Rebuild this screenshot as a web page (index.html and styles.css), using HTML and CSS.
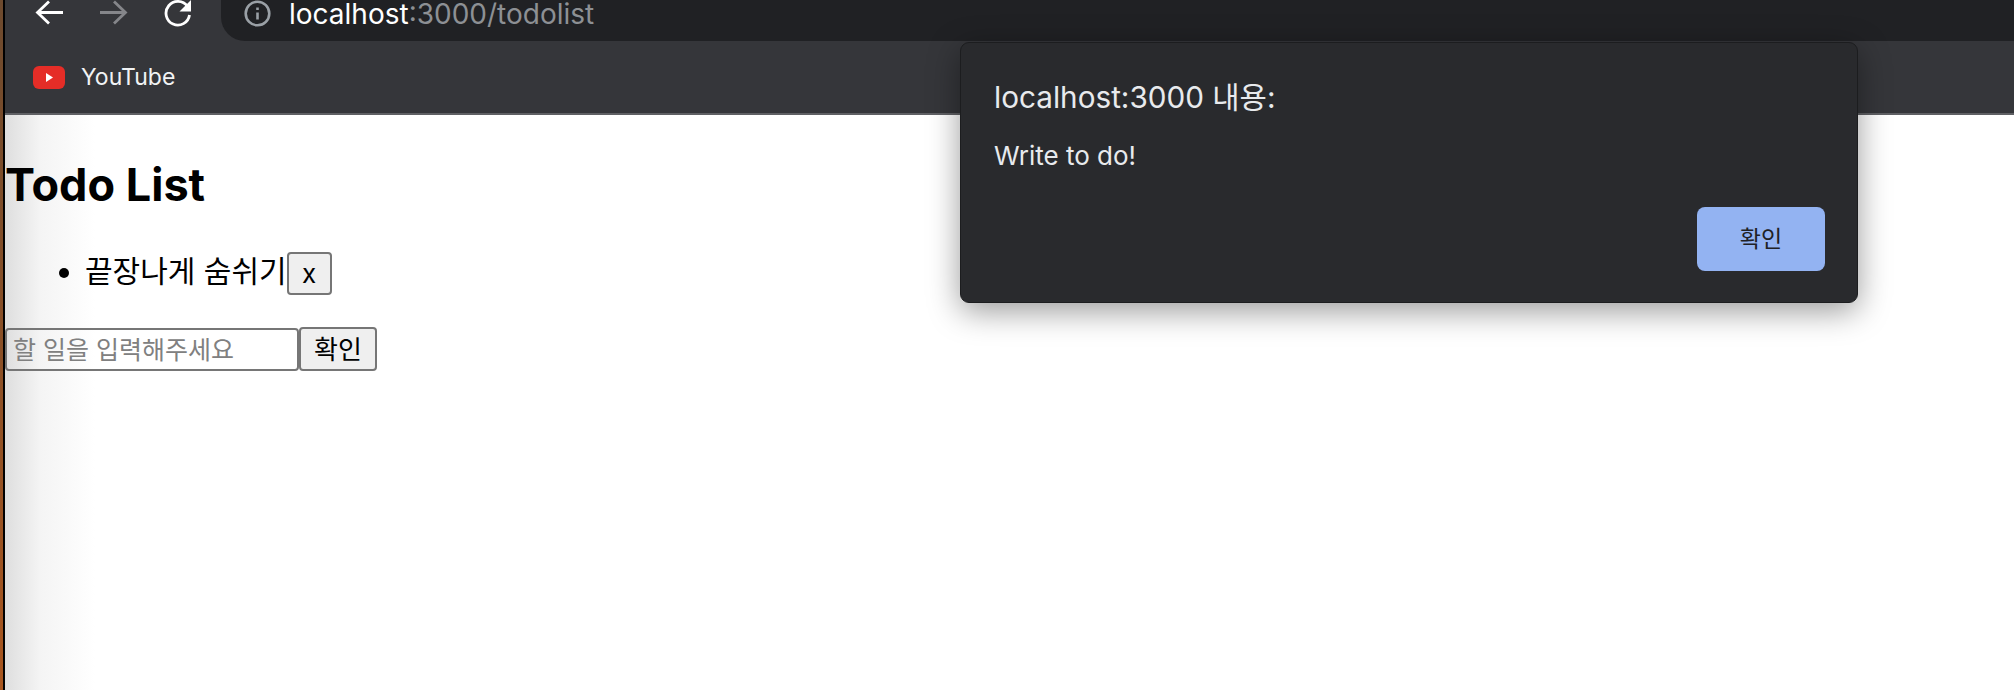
FILE: index.html
```html
<!DOCTYPE html>
<html lang="ko">
<head>
  <meta charset="UTF-8" />
  <title>Todo List</title>
  <link rel="stylesheet" href="styles.css">
</head>
<body>
  <div class="window">

    <!-- 상단 툴바 -->
    <div class="toolbar">
      <div class="nav-row">
        <svg class="nav-icon back" viewBox="0 0 29 26"><path d="M28 12.500H3M14 1.500 2.500 12.500 14 23.500" /></svg>
        <svg class="nav-icon forward" viewBox="0 0 29 26"><path d="M1 12.500h25M15 1.500l11.500 11L15 23.500" /></svg>
        <svg class="nav-icon reload" viewBox="0 0 30 27"><path d="M24.500 6.500A11.800 11.800 0 1 0 26.500 15" /><path class="fill" d="M28 0v11.500H16.500z" /></svg>
        <div class="address">
          <svg class="info" viewBox="0 0 27 27"><circle cx="13.500" cy="13.500" r="11.800" /><path d="M13.500 12.500v7" /><path d="M13.500 7.500v2.500" /></svg>
          <span class="host">localhost</span><span class="path">:3000/todolist</span>
        </div>
      </div>
      <div class="bookmarks">
        <svg class="yt" viewBox="0 0 32 23"><rect width="32" height="23" rx="6" /><path d="M13 7l7 4.500-7 4.500z" /></svg>
        <span>YouTube</span>
      </div>
    </div>

    <!-- 본문 -->
    <div class="page">
      <h1>Todo List</h1>
      <ul class="todos">
        <li>끝장나게 숨쉬기<button class="btn x">x</button></li>
      </ul>
      <form class="add">
        <input type="text" placeholder="할 일을 입력해주세요" /><button class="btn ok" type="button">확인</button>
      </form>
    </div>

    <!-- alert 창 -->
    <div class="alert">
      <div class="alert-title">localhost:3000 내용:</div>
      <div class="alert-msg">Write to do!</div>
      <div class="alert-foot"><button class="alert-ok">확인</button></div>
    </div>
  </div>
</body>
</html>
```

FILE: styles.css
```css
html, body {
  margin: 0;
  height: 100%;
  overflow: hidden;
}

body {
  font-family: Inter, 'Noto Sans CJK KR', sans-serif;
  background: linear-gradient(to bottom, #6d4a2e, #a8561f);
}

.window {
  position: relative;
  height: 690px;
  margin-left: 3px;
  border-left: 2px solid #000;
  display: flex;
  flex-direction: column;
}

.toolbar {
  height: 113px;
  background: #35363a;
  border-bottom: 2px solid #5f6064;
}

.nav-row {
  display: flex;
  height: 41px;
}

.nav-icon {
  width: 29px;
  height: 26px;
  flex: none;
  fill: none;
  stroke: #fff;
  stroke-width: 2.8;
}

.nav-icon .fill {
  fill: #fff;
  stroke: none;
}

.back { margin-left: 30px; }
.forward { margin-left: 35px; stroke: #85868a; }
.reload { margin-left: 35px; width: 30px; height: 27px; }

.address {
  flex: 1;
  margin-left: 28px;
  padding-left: 23px;
  display: flex;
  align-items: center;
  height: 41px;
  box-sizing: border-box;
  background: #202124;
  border-bottom-left-radius: 24px;
  font-size: 28px;
}

.info {
  width: 27px;
  height: 27px;
  margin-right: 18px;
  margin-top: -14px;
  fill: none;
  stroke: #9aa0a6;
  stroke-width: 2.6;
}

.host, .path {
  margin-top: -14px;
}

.host { color: #fff; }
.path { color: #8d9094; }

.bookmarks {
  display: flex;
  align-items: center;
  gap: 16px;
  height: 72px;
  padding-left: 28px;
  color: #f1f3f4;
  font-size: 23px;
}

.yt {
  width: 32px;
  height: 23px;
  fill: #e52d27;
}

.yt path { fill: #fff; }

.page {
  flex: 1;
  background: linear-gradient(to right, #dedede, #f4f4f4 35px, #fff 90px);
  color: #000;
}

h1 {
  margin: 0;
  padding-top: 44px;
  font-size: 45px;
  line-height: 52px;
  font-weight: 700;
}

.todos {
  margin: 41px 0 0;
  padding-left: 80px;
  font-size: 30px;
  line-height: 38px;
}

.add {
  display: flex;
  align-items: flex-start;
  margin-top: 32px;
}

.add input {
  width: 294px;
  height: 43px;
  margin-top: 1px;
  box-sizing: border-box;
  padding: 0 6px;
  border: 2px solid #767676;
  border-radius: 4px;
  background: transparent;
  font: 25px Inter, 'Noto Sans CJK KR', sans-serif;
}

.add input::placeholder {
  color: #808080;
}

.btn {
  box-sizing: border-box;
  border: 2px solid #767676;
  border-radius: 4px;
  background: #efefef;
  color: #000;
  padding: 0;
  font-family: Inter, 'Noto Sans CJK KR', sans-serif;
}

.x {
  width: 45px;
  height: 43px;
  font-size: 26px;
  vertical-align: top;
}

.ok {
  width: 78px;
  height: 44px;
  padding-bottom: 3px;
  font-size: 26px;
}

/* alert */
.alert {
  position: absolute;
  left: 955px;
  top: 42px;
  width: 898px;
  height: 261px;
  box-sizing: border-box;
  padding: 36px 32px 31px 33px;
  display: flex;
  flex-direction: column;
  background: #292a2d;
  border: 1px solid #1c1d1f;
  border-radius: 9px;
  box-shadow: 0 8px 32px rgba(0, 0, 0, 0.4);
  color: #e8eaed;
}

.alert-title {
  font-size: 29.7px;
  line-height: 36px;
}

.alert-msg {
  margin-top: 25px;
  font-size: 26px;
  line-height: 32px;
}

.alert-foot {
  margin-top: auto;
  display: flex;
  justify-content: flex-end;
}

.alert-ok {
  width: 128px;
  height: 64px;
  border: none;
  border-radius: 8px;
  background: #93b3f2;
  color: #202124;
  padding: 0 0 4px;
  font-family: Inter, 'Noto Sans CJK KR', sans-serif;
  font-size: 23px;
}
```
